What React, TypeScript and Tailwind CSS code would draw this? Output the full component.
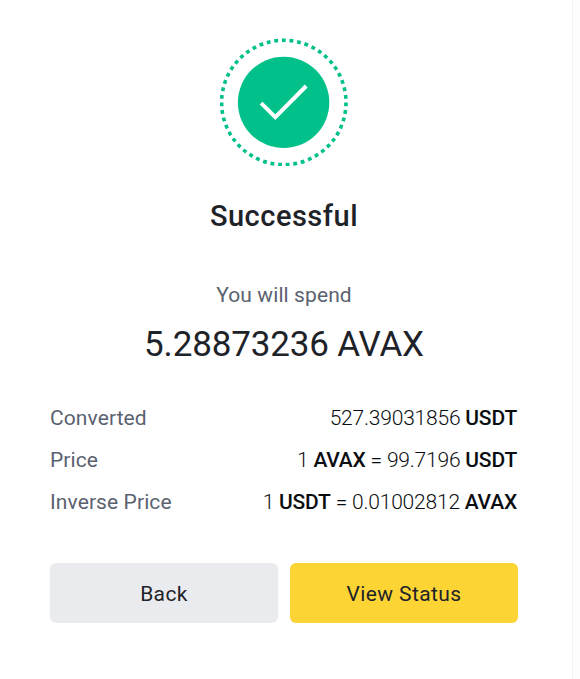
interface Part {
  text: string;
  bold?: boolean;
}

interface Detail {
  label: string;
  value: Part[];
}

const details: Detail[] = [
  {
    label: "Converted",
    value: [{ text: "527.39031856 " }, { text: "USDT", bold: true }],
  },
  {
    label: "Price",
    value: [
      { text: "1 " },
      { text: "AVAX", bold: true },
      { text: " = 99.7196 " },
      { text: "USDT", bold: true },
    ],
  },
  {
    label: "Inverse Price",
    value: [
      { text: "1 " },
      { text: "USDT", bold: true },
      { text: " = 0.01002812 " },
      { text: "AVAX", bold: true },
    ],
  },
];

const SuccessIcon = () => (
  <svg className="h-32 w-32" viewBox="0 0 128 128" fill="none">
    {/* Dotted ring, 51 dashes starting at the top */}
    <circle
      cx="63.8"
      cy="64.5"
      r="62.2"
      stroke="#02c08a"
      strokeWidth="3.6"
      pathLength="102"
      strokeDasharray="1 1"
      strokeDashoffset="0.5"
      transform="rotate(-90 63.8 64.5)"
    />
    <circle cx="63.6" cy="64.4" r="45.7" fill="#02c08a" />
    <path d="M41.1 65.2L55.3 79.2L86.2 48" stroke="#fff" strokeWidth="4" />
  </svg>
);

const App = () => {
  return (
    <div className="flex h-[679px] w-[580px] bg-[#fdfdfd] font-['Roboto',sans-serif]">
      <div className="flex w-[573px] flex-col border-r border-[#f3f3f3] bg-white pr-[54px] pl-[50px]">
        <div className="flex flex-col items-center pt-[38px]">
          <SuccessIcon />
          <h1 className="mt-[30px] text-[29px] leading-10 font-medium tracking-[0.5px] text-[#1e2329]">
            Successful
          </h1>
          <p className="mt-[44px] text-[21px] leading-[30px] tracking-[0.1px] text-[#5a6270]">
            You will spend
          </p>
          <p className="mt-[15px] text-[35px] leading-10 tracking-[-0.15px] text-[#1e2329]">
            5.28873236 AVAX
          </p>
        </div>

        {/* Conversion details */}
        <div className="mt-[33px] flex flex-col">
          {details.map((row) => (
            <div
              key={row.label}
              className="flex h-[42px] items-center justify-between text-[21px] whitespace-pre"
            >
              <span className="tracking-[0.1px] text-[#5a6270]">{row.label}</span>
              <span className="pr-px tracking-[-0.2px] text-[#0b0e11]">
                {row.value.map((part, i) => (
                  <span key={i} className={part.bold ? "font-medium" : "font-light"}>
                    {part.text}
                  </span>
                ))}
              </span>
            </div>
          ))}
        </div>

        <div className="mt-[39px] flex gap-3 text-[21px] tracking-[0.4px] text-[#1e2329]">
          <button className="h-[60px] w-[228px] rounded-md bg-[#eaebef] pt-[3px]">Back</button>
          <button className="h-[60px] w-[228px] rounded-md bg-[#fcd434] pt-[3px]">
            View Status
          </button>
        </div>
      </div>
    </div>
  );
};

export default App;
